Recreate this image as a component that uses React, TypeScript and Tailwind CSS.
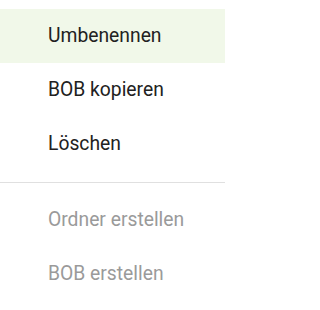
const items = [
  { label: 'Umbenennen', active: true },
  { label: 'BOB kopieren' },
  { label: 'Löschen' },
];

const disabled = ['Ordner erstellen', 'BOB erstellen'];

export default function App() {
  return (
    <div
      className="w-[225px] h-[310px] bg-white pt-[9px] overflow-hidden"
      style={{ fontFamily: 'Roboto, "Noto Sans", sans-serif' }}
    >
      <ul>
        {items.map((item) => (
          <li
            key={item.label}
            className={
              'h-[54px] flex items-center pl-12 text-[19.3px] text-[#212121] ' +
              (item.active ? 'bg-[#f1f8e9]' : '')
            }
          >
            {item.label}
          </li>
        ))}
      </ul>
      <div className="mt-[11px] mb-[10px] h-px bg-[#e0e0e0]" />
      <ul>
        {disabled.map((label) => (
          <li key={label} className="h-[54px] flex items-center pl-12 text-[19.3px] text-[#9a9a9a]">
            {label}
          </li>
        ))}
      </ul>
    </div>
  );
}
